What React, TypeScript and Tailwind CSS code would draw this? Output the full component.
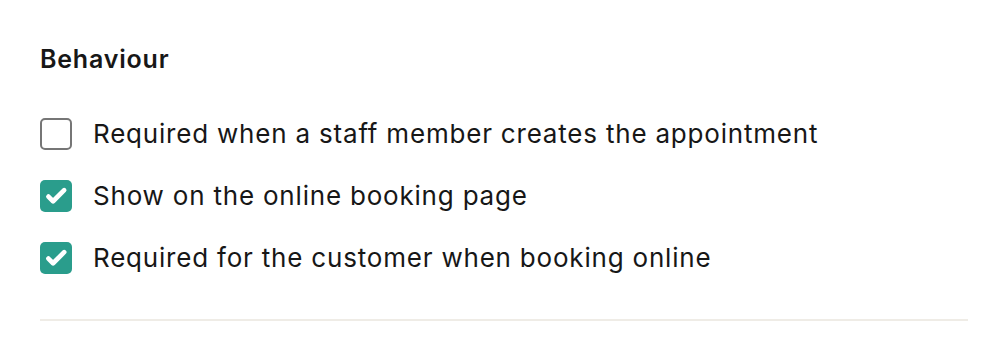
import React, { useState } from 'react';

const options = [
  { id: 'staff', label: 'Required when a staff member creates the appointment', checked: false },
  { id: 'online', label: 'Show on the online booking page', checked: true },
  { id: 'customer', label: 'Required for the customer when booking online', checked: true },
];

function Checkbox({ checked, onChange }: { checked: boolean; onChange: () => void }) {
  return (
    <button
      type="button"
      onClick={onChange}
      className={`w-8 h-8 shrink-0 rounded-[5px] flex items-center justify-center ${
        checked ? 'bg-[#2a9d8c]' : 'border-2 border-[#767676] bg-white'
      }`}
    >
      {checked && (
        <svg viewBox="0 0 24 24" className="w-[28px] h-[28px]" fill="none" stroke="white" strokeWidth="4" strokeLinecap="round" strokeLinejoin="round">
          <path d="M5.5 12.5l4 4L19 7" />
        </svg>
      )}
    </button>
  );
}

export default function App() {
  const [values, setValues] = useState(options.map(o => o.checked));

  return (
    <div className="bg-white w-[1008px] h-[360px] px-10 pt-[43px] font-['Inter',sans-serif] text-[#171717]">
      <h3 className="text-[25px] font-semibold leading-8 tracking-[0.8px]">Behaviour</h3>
      <div className="mt-[43px] flex flex-col gap-[30px]">
        {options.map((o, i) => (
          <label key={o.id} className="flex items-center gap-[21px] cursor-pointer">
            <Checkbox
              checked={values[i]}
              onChange={() => setValues(v => v.map((x, j) => (j === i ? !x : x)))}
            />
            <span className="text-[26px] leading-8 tracking-[0.8px]">{o.label}</span>
          </label>
        ))}
      </div>
      <div className="mt-[45px] h-[2px] w-[928px] bg-[#efece6]" />
    </div>
  );
}
